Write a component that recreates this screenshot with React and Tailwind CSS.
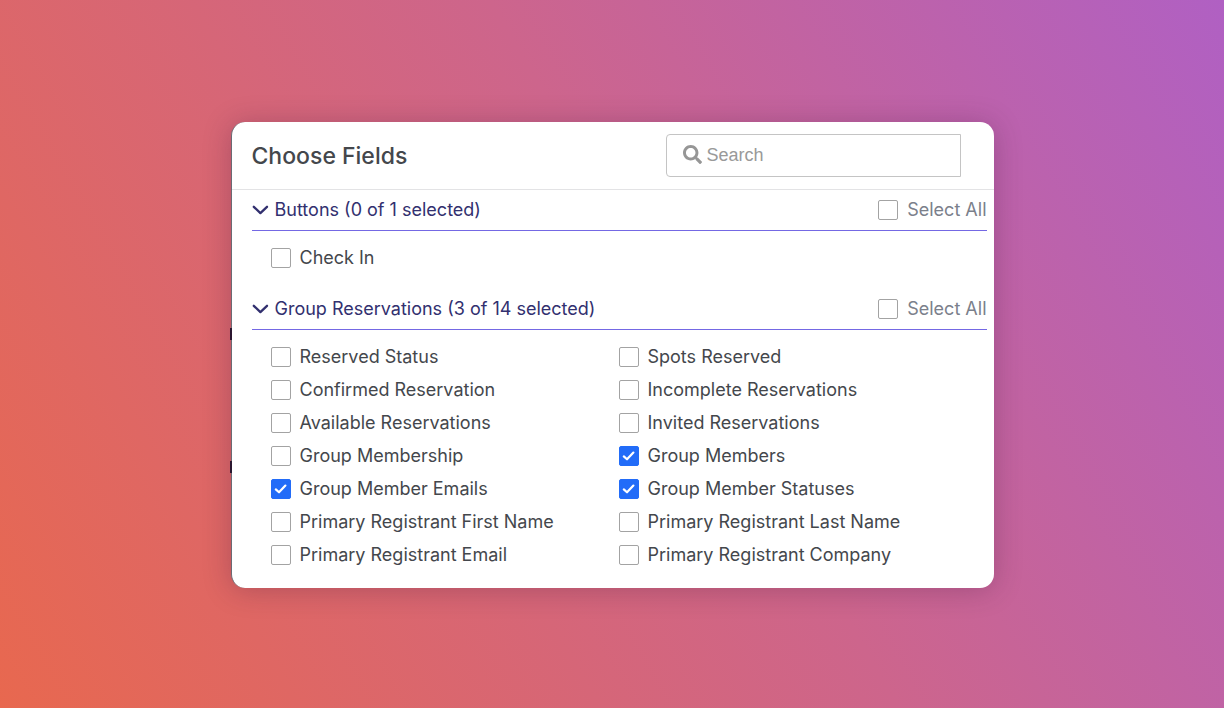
import React, { useState } from 'react';
import { FaSearch } from 'react-icons/fa';
import clsx from 'clsx';

const SECTIONS = [
  { id: 'buttons', title: 'Buttons', fields: ['Check In'] },
  {
    id: 'group-reservations',
    title: 'Group Reservations',
    fields: [
      'Reserved Status',
      'Spots Reserved',
      'Confirmed Reservation',
      'Incomplete Reservations',
      'Available Reservations',
      'Invited Reservations',
      'Group Membership',
      'Group Members',
      'Group Member Emails',
      'Group Member Statuses',
      'Primary Registrant First Name',
      'Primary Registrant Last Name',
      'Primary Registrant Email',
      'Primary Registrant Company',
    ],
  },
];

const Checkbox = ({ label, checked, onChange, className }) => (
  <label className={clsx('flex cursor-pointer items-center gap-[9px] whitespace-nowrap', className)}>
    <span className="grid shrink-0">
      <input
        type="checkbox"
        checked={checked}
        onChange={onChange}
        className="peer col-start-1 row-start-1 size-5 appearance-none rounded-xs border border-[#a3a3a3] bg-white checked:border-[#226cf8] checked:bg-[#226cf8]"
      />
      <svg
        viewBox="0 0 20 20"
        className="pointer-events-none invisible col-start-1 row-start-1 size-5 peer-checked:visible"
        fill="none"
        stroke="white"
        strokeWidth="2.2"
        strokeLinecap="round"
        strokeLinejoin="round"
      >
        <path d="M4.8 10.4 8 13.3 14.4 6.6" />
      </svg>
    </span>
    <span>{label}</span>
  </label>
);

const Section = ({ section, fields, selected, onToggle, onToggleAll }) => {
  const [open, setOpen] = useState(true);
  const count = section.fields.filter((f) => selected.includes(f)).length;

  return (
    <section className="pb-[15px]">
      <div className="flex h-[41px] items-center justify-between border-b border-[#7468e4]">
        <button
          type="button"
          aria-expanded={open}
          onClick={() => setOpen(!open)}
          className="flex cursor-pointer items-center gap-1.5 text-[#32306f]"
        >
          <svg
            viewBox="0 0 17 10"
            className={clsx('h-2.5 w-[17px]', !open && '-rotate-90')}
            fill="none"
            stroke="currentColor"
            strokeWidth="2.3"
            strokeLinecap="round"
            strokeLinejoin="round"
          >
            <path d="M1.8 1.8 8.4 8.1 15 1.8" />
          </svg>
          <span>
            {section.title} ({count} of {section.fields.length} selected)
          </span>
        </button>
        <Checkbox
          label="Select All"
          checked={count === section.fields.length}
          onChange={() => onToggleAll(section)}
          className="text-[#7b808b]"
        />
      </div>
      {open && (
        <div className="grid grid-cols-2 pt-2.5 pr-5 pl-[19px]">
          {fields.map((field) => (
            <Checkbox
              key={field}
              label={field}
              checked={selected.includes(field)}
              onChange={() => onToggle(field)}
              className="h-[33px] text-[#44474c]"
            />
          ))}
        </div>
      )}
    </section>
  );
};

const App = () => {
  const [query, setQuery] = useState('');
  const [selected, setSelected] = useState([
    'Group Members',
    'Group Member Emails',
    'Group Member Statuses',
  ]);

  const toggle = (field) => {
    setSelected((prev) =>
      prev.includes(field) ? prev.filter((f) => f !== field) : [...prev, field]
    );
  };

  const toggleAll = (section) => {
    setSelected((prev) => {
      const rest = prev.filter((f) => !section.fields.includes(f));
      const all = section.fields.every((f) => prev.includes(f));
      return all ? rest : [...rest, ...section.fields];
    });
  };

  return (
    <main className="flex min-h-screen items-center justify-center bg-[linear-gradient(60deg,#e8684f,#cd658c_55%,#b060c3)] pt-0.5 font-['Inter',sans-serif] text-lg">
      <div className="relative w-full max-w-[763px] rounded-[14px] border-l border-[#6b6b74] bg-white shadow-[0_2px_28px_rgba(60,20,60,0.28)]">
        <span className="absolute top-[206px] -left-0.5 h-3 w-0.5 bg-[#2b1730]" />
        <span className="absolute top-[339px] -left-0.5 h-3 w-0.5 bg-[#2b1730]" />
        <header className="flex items-center justify-between border-b border-[#e3e3e5] py-3 pr-[33px] pl-5">
          <h1 className="text-[23px] leading-8 font-medium text-[#44474c]">Choose Fields</h1>
          <label className="flex h-[43px] w-[295px] items-center gap-[5px] rounded-l border border-[#c4c4c4] px-4 pb-0.5">
            <FaSearch className="size-[19px] shrink-0 text-[#969696]" />
            <input
              type="text"
              aria-label="Search"
              placeholder="Search"
              value={query}
              onChange={(e) => setQuery(e.target.value)}
              className="min-w-0 flex-1 font-['Liberation_Sans',sans-serif] text-[#44474c] outline-none placeholder:text-[#999999]"
            />
          </label>
        </header>
        <div className="pr-[7px] pb-0.5 pl-5">
          {SECTIONS.map((section) => (
            <Section
              key={section.id}
              section={section}
              fields={section.fields.filter((f) => f.toLowerCase().includes(query.toLowerCase()))}
              selected={selected}
              onToggle={toggle}
              onToggleAll={toggleAll}
            />
          ))}
        </div>
      </div>
    </main>
  );
};

export default App;
